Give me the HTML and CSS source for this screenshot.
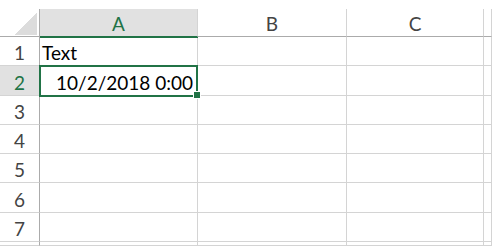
FILE: index.html
```html
<!DOCTYPE html>
<html>
<head>
<meta charset="utf-8">
<link rel="stylesheet" href="styles.css">
</head>
<body>
<div class="sheet">
  <div class="grid">
    <div class="hd corner"><span class="tri"></span></div>
    <div class="hd col sel">A</div>
    <div class="hd col">B</div>
    <div class="hd col">C</div>
    <div class="hd col"></div>

    <div class="rh">1</div><div class="cell">Text</div><div class="cell"></div><div class="cell"></div><div class="cell"></div>
    <div class="rh sel">2</div><div class="cell num">10/2/2018 0:00</div><div class="cell"></div><div class="cell"></div><div class="cell"></div>
    <div class="rh">3</div><div class="cell"></div><div class="cell"></div><div class="cell"></div><div class="cell"></div>
    <div class="rh">4</div><div class="cell"></div><div class="cell"></div><div class="cell"></div><div class="cell"></div>
    <div class="rh">5</div><div class="cell"></div><div class="cell"></div><div class="cell"></div><div class="cell"></div>
    <div class="rh">6</div><div class="cell"></div><div class="cell"></div><div class="cell"></div><div class="cell"></div>
    <div class="rh">7</div><div class="cell"></div><div class="cell"></div><div class="cell"></div><div class="cell"></div>
    <div class="rh"></div><div class="cell"></div><div class="cell"></div><div class="cell"></div><div class="cell"></div>
  </div>
  <div class="selection"></div>
  <div class="handle"></div>
</div>
</body>
</html>
```

FILE: styles.css
```css
html, body {
  margin: 0;
  padding: 0;
  background: #fff;
  height: 246px;
  overflow: hidden;
}
body {
  padding-top: 9px;
  box-sizing: border-box;
  font-family: Lato, "Open Sans", sans-serif;
  font-size: 19px;
  line-height: 1;
}
.sheet {
  position: relative;
  height: 237px;
}
.grid {
  display: grid;
  grid-template-columns: 40px 158px 149px 137px 1fr;
  grid-template-rows: 28px 29px 30px 29px 29px 29px 30px 29px 1fr;
  height: 100%;
}
.grid > div {
  box-sizing: border-box;
  display: flex;
  align-items: flex-end;
  min-width: 0;
  overflow: hidden;
  white-space: nowrap;
}
.hd {
  border-bottom: 1px solid #ababab;
  border-right: 1px solid #d4d4d4;
  color: #444;
  justify-content: center;
  padding-bottom: 3px;
}
.hd.corner {
  border-right-color: #ababab;
  justify-content: flex-end;
  padding: 0 2px 1px 0;
}
.tri {
  display: block;
  flex: 0 0 22px;
  width: 22px;
  height: 22px;
  background: linear-gradient(to bottom right, rgba(255,255,255,0) 50%, #dcdcdc 50%);
}
.hd.col.sel {
  background: #e1e1e1;
  color: #217346;
  box-shadow: 0 1px 0 #217346;
  border-bottom-color: #217346;
  position: relative;
  z-index: 1;
}
.rh {
  border-right: 1px solid #ababab;
  border-bottom: 1px solid #d4d4d4;
  color: #444;
  justify-content: center;
  padding-bottom: 3px;
}
.rh.sel {
  background: #e1e1e1;
  color: #217346;
}
.cell {
  border-right: 1px solid #d4d4d4;
  border-bottom: 1px solid #d4d4d4;
  color: #000;
  padding: 0 4px 3px 2px;
}
.cell.num {
  justify-content: flex-end;
}
.selection {
  position: absolute;
  left: 39px;
  top: 56px;
  width: 159px;
  height: 32px;
  box-sizing: border-box;
  border: 2px solid #217346;
  pointer-events: none;
}
.handle {
  position: absolute;
  left: 193px;
  top: 82px;
  width: 8px;
  height: 8px;
  box-sizing: border-box;
  border: 1px solid #fff;
  background: #217346;
}
```
